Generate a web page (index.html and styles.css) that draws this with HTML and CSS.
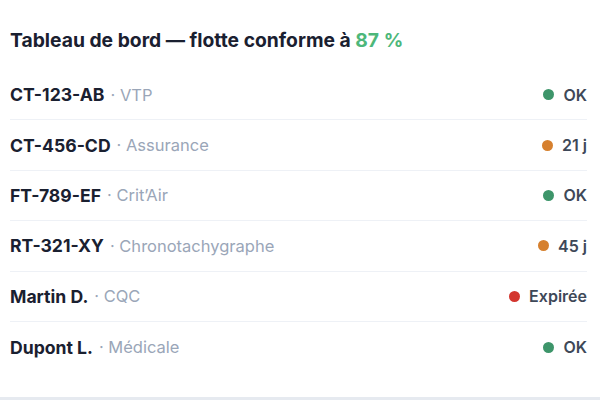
FILE: index.html
```html
<!DOCTYPE html>
<html lang="fr">
<head>
<meta charset="utf-8">
<link rel="stylesheet" href="styles.css">
</head>
<body>
<div class="card">
  <h1 class="title">Tableau de bord — flotte conforme à <span class="pct">87 %</span></h1>
  <ul class="list">
    <li class="row"><span class="name">CT-123-AB</span><span class="sub">· VTP</span><span class="status"><i class="dot ok"></i>OK</span></li>
    <li class="row"><span class="name">CT-456-CD</span><span class="sub">· Assurance</span><span class="status"><i class="dot warn"></i>21 j</span></li>
    <li class="row"><span class="name">FT-789-EF</span><span class="sub">· Crit’Air</span><span class="status"><i class="dot ok"></i>OK</span></li>
    <li class="row"><span class="name">RT-321-XY</span><span class="sub">· Chronotachygraphe</span><span class="status"><i class="dot warn"></i>45 j</span></li>
    <li class="row"><span class="name">Martin D.</span><span class="sub">· CQC</span><span class="status"><i class="dot bad"></i>Expirée</span></li>
    <li class="row"><span class="name">Dupont L.</span><span class="sub">· Médicale</span><span class="status"><i class="dot ok"></i>OK</span></li>
  </ul>
</div>
</body>
</html>
```
FILE: styles.css
```css
html, body { margin: 0; padding: 0; }
body {
  background: #e6eaf0;
  font-family: Inter, "Noto Sans", sans-serif;
  width: 600px;
  height: 400px;
  overflow: hidden;
}
.card {
  background: #ffffff;
  height: 397px;
  box-sizing: border-box;
  padding: 27px 13px 0 10px;
}
.title {
  margin: 0 0 17px 0;
  font-size: 19.3px;
  line-height: 26px;
  font-weight: 700;
  color: #1a2030;
}
.pct { color: #4db77a; }
.list { list-style: none; margin: 0; padding: 0; }
.row {
  display: flex;
  align-items: center;
  height: 50.4px;
  box-sizing: border-box;
  border-bottom: 1px solid #eef1f6;
}
.row:last-child { border-bottom: none; }
.name {
  font-size: 17.6px;
  font-weight: 700;
  color: #1a2030;
}
.sub {
  margin-left: 6px;
  font-size: 16.5px;
  color: #9aa6b8;
}
.status {
  margin-left: auto;
  display: flex;
  align-items: center;
  font-size: 16px;
  font-weight: 600;
  color: #3e4858;
}
.dot {
  width: 11px;
  height: 11px;
  border-radius: 50%;
  margin-right: 9px;
  display: inline-block;
}
.ok { background: #3d956a; }
.warn { background: #d6802e; }
.bad { background: #d3362f; }
```
